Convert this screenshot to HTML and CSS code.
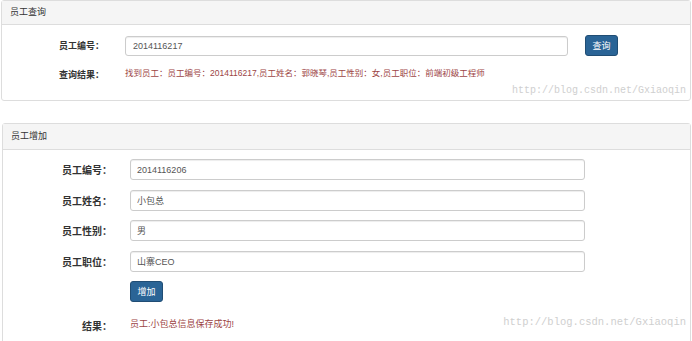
FILE: index.html
```html
<!DOCTYPE html>
<html lang="zh-CN">
  <head>
    <meta charset="UTF-8" />
    <title>员工管理</title>
    <link rel="stylesheet" href="styles.css">
  </head>
  <body>
    <div class="panel panel-query">
      <div class="panel-heading">员工查询</div>
      <div class="panel-body">
        <div class="query-row">
          <label class="form-label">员工编号：</label>
          <input class="form-input" type="text" value="2014116217" />
          <button class="btn">查询</button>
        </div>
        <div class="query-row result-row">
          <label class="form-label">查询结果：</label>
          <div class="result-text">找到员工：员工编号：2014116217,员工姓名：郭晓琴,员工性别：女,员工职位：前端初级工程师</div>
        </div>
      </div>
      <div class="watermark">http://blog.csdn.net/Gxiaoqin</div>
    </div>

    <div class="panel panel-add">
      <div class="panel-heading">员工增加</div>
      <div class="panel-body">
        <div class="add-row">
          <label class="form-label">员工编号：</label>
          <input class="form-input" type="text" value="2014116206" />
        </div>
        <div class="add-row">
          <label class="form-label">员工姓名：</label>
          <input class="form-input" type="text" value="小包总" />
        </div>
        <div class="add-row">
          <label class="form-label">员工性别：</label>
          <input class="form-input" type="text" value="男" />
        </div>
        <div class="add-row">
          <label class="form-label">员工职位：</label>
          <input class="form-input" type="text" value="山寨CEO" />
        </div>
        <div class="add-row">
          <span></span>
          <div><button class="btn">增加</button></div>
        </div>
        <div class="add-row result-row">
          <label class="form-label">结果：</label>
          <div class="result-text">员工:小包总信息保存成功!</div>
        </div>
      </div>
      <div class="watermark">http://blog.csdn.net/Gxiaoqin</div>
    </div>
  </body>
</html>
```

FILE: styles.css
```css
* {
  box-sizing: border-box;
  margin: 0;
  padding: 0;
}

body {
  background-color: #fff;
  font-family: "Liberation Sans", "Noto Sans CJK SC", sans-serif;
  color: #333;
  overflow: hidden;
}

.panel {
  position: relative;
  border: 1px solid #ddd;
  border-radius: 3px;
  background-color: #fff;
}

.panel-query {
  margin: 0 1px 0 1px;
}

.panel-add {
  margin: 22px 1px 0 2px;
}

.panel-heading {
  background-color: #f5f5f5;
  border-bottom: 1px solid #ddd;
  padding: 0 8px;
  height: 24px;
  line-height: 23px;
  font-size: 9px;
  color: #333;
}

.panel-add .panel-heading {
  height: 26px;
  line-height: 25px;
}

.panel-query .panel-body {
  height: 75px;
  padding-top: 10px;
}

.panel-add .panel-body {
  padding-top: 9px;
  height: 200px;
}

.query-row {
  display: grid;
  grid-template-columns: 103px 443px 33px;
  column-gap: 20px;
  align-items: center;
}

.query-row .btn {
  margin-left: -3px;
}

.query-row .form-input {
  height: 20px;
}

.add-row {
  display: grid;
  grid-template-columns: 109px 455px;
  column-gap: 18px;
  align-items: center;
  margin-bottom: 9.5px;
}

.form-label {
  text-align: right;
  font-weight: bold;
  color: #333;
}

.panel-query .form-label {
  font-size: 9px;
  padding-right: 1px;
}

.panel-add .form-label {
  font-size: 10px;
}

.form-input {
  height: 21px;
  width: 100%;
  border: 1px solid #ccc;
  border-radius: 3px;
  box-shadow: inset 0 1px 1px rgba(0, 0, 0, 0.075);
  padding: 0 7px;
  font-family: inherit;
  font-size: 9px;
  color: #555;
  background-color: #fff;
}

.panel-add .form-input {
  padding: 0 6px;
}

.btn {
  width: 33px;
  height: 21px;
  border: 1px solid #204d74;
  border-radius: 3px;
  background-color: #2a6496;
  color: #fff;
  font-family: inherit;
  font-size: 9px;
}

.result-row {
  margin-top: 4px;
  line-height: 20px;
}

.panel-add .result-row {
  margin-top: 4px;
}

.result-row .form-label {
  padding-top: 5px;
}

.result-text {
  font-size: 8.5px;
  color: #9c4444;
}

.panel-add .result-text {
  font-size: 9px;
}

.watermark {
  position: absolute;
  right: 4px;
  font-family: "Liberation Mono", monospace;
  font-size: 10px;
  color: #cfcfcf;
}

.panel-query .watermark {
  bottom: 4px;
}

.panel-add .watermark {
  top: 192px;
  font-size: 10.5px;
}
```
